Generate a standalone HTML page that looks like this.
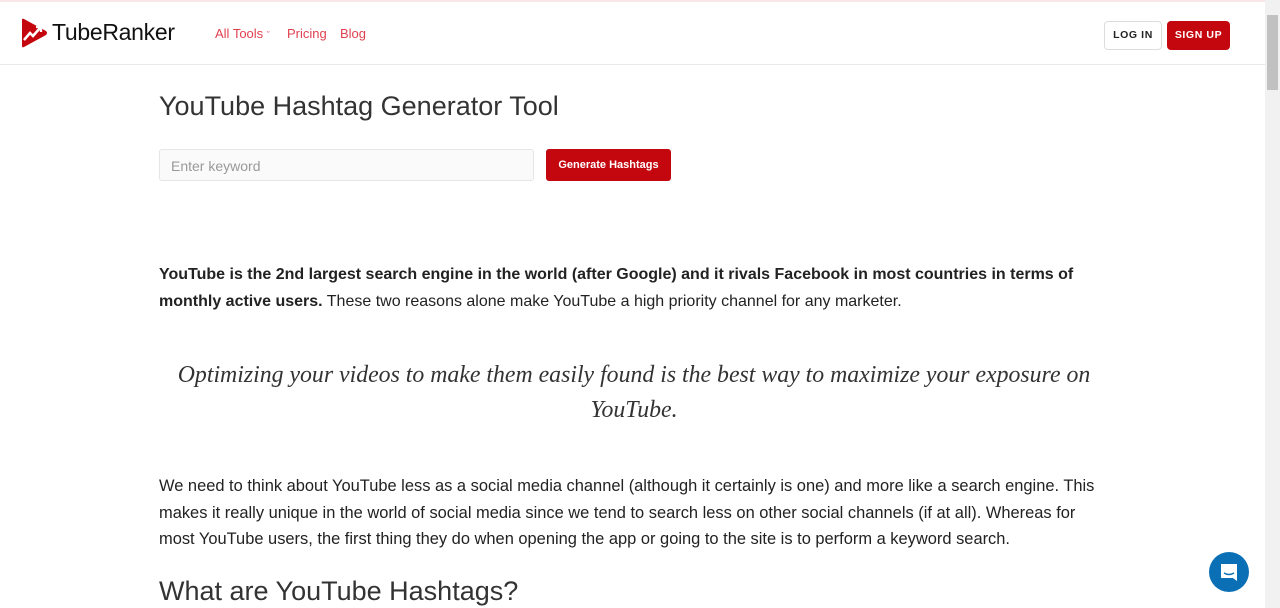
<!DOCTYPE html>
<html><head><style>
*{margin:0;padding:0;box-sizing:border-box}
body{width:1280px;height:608px;overflow:hidden;background:#fff;font-family:"Liberation Sans",sans-serif;color:#222;position:relative}
.top{position:absolute;left:0;top:0;width:1265px;height:2px;background:#f8e6e8}
.hdr{position:absolute;left:0;top:2px;width:1265px;height:63px;border-bottom:1px solid #e8e8e8}
.logo{position:absolute;left:20px;top:16px}
.brand{position:absolute;left:52px;top:17px;font-size:23px;color:#111;letter-spacing:-0.3px}
.nav{position:absolute;top:24px;font-size:13px;color:#e0414f}
.btn{position:absolute;top:19px;height:29px;border-radius:4px;font-size:11px;font-weight:bold;letter-spacing:0.6px;text-align:center;line-height:29px}
.sb{position:absolute;right:0;top:0;width:15px;height:608px;background:#f1f1f1}
.thumb{position:absolute;right:2px;top:15px;width:11px;height:75px;background:#c1c1c1}
h1{position:absolute;left:159px;top:91px;font-size:27px;font-weight:normal;color:#333}
.inp{position:absolute;left:159px;top:149px;width:375px;height:32px;border:1px solid #e6e6e6;border-radius:3px;background:#fafafa;font-size:14px;color:#999;padding:8px 11px}
.gen{position:absolute;left:546px;top:149px;width:125px;height:32px;background:#c4070f;border-radius:3px;color:#fff;font-size:11px;font-weight:bold;text-align:center;line-height:32px}
p{position:absolute;left:159px;width:950px;font-size:16px;line-height:26.5px;color:#222}
.q{position:absolute;left:159px;width:950px;text-align:center;font-family:"Liberation Serif",serif;font-style:italic;font-size:23.8px;line-height:35px;color:#333}
h2{position:absolute;left:159px;top:576px;font-size:27px;font-weight:normal;color:#333}
.chat{position:absolute;left:1209px;top:552px;width:40px;height:40px;border-radius:50%;background:#0a6fb5}
</style></head><body>
<div class="top"></div>
<div class="hdr">
<svg class="logo" width="28" height="30" viewBox="0 0 28 30"><path d="M2 2 Q2 0 4 1 L26 13 Q28 15 26 17 L4 29 Q2 30 2 28 Z" fill="#c4070f"/><path d="M4 22 L10 15 L13 18 L20 10" stroke="#fff" stroke-width="2.5" fill="none"/><path d="M16 9 L21 9 L21 14" stroke="#fff" stroke-width="2.3" fill="none"/></svg>
<div class="brand">TubeRanker</div>
<div class="nav" style="left:215px">All Tools <span style="font-size:9px">ˇ</span></div>
<div class="nav" style="left:287px">Pricing</div>
<div class="nav" style="left:340px">Blog</div>
<div class="btn" style="left:1104px;width:58px;border:1px solid #ddd;color:#222;line-height:27px;font-size:10.5px">LOG IN</div>
<div class="btn" style="left:1167px;width:63px;background:#c4070f;color:#fff;font-size:10.5px">SIGN UP</div>
</div>
<div class="sb"><div class="thumb"></div></div>
<h1>YouTube Hashtag Generator Tool</h1>
<div class="inp">Enter keyword</div>
<div class="gen">Generate Hashtags</div>
<p style="top:262px"><b>YouTube is the 2nd largest search engine in the world (after Google) and it rivals Facebook in most countries in terms of monthly active users.</b> These two reasons alone make YouTube a high priority channel for any marketer.</p>
<div class="q" style="top:358px">Optimizing your videos to make them easily found is the best way to maximize your exposure on YouTube.</div>
<p style="top:473px;font-size:16.45px;width:945px">We need to think about YouTube less as a social media channel (although it certainly is one) and more like a search engine. This makes it really unique in the world of social media since we tend to search less on other social channels (if at all). Whereas for most YouTube users, the first thing they do when opening the app or going to the site is to perform a keyword search.</p>
<h2>What are YouTube Hashtags?</h2>
<div class="chat"><svg width="40" height="40" viewBox="0 0 40 40"><path d="M12 12 h16 v17 l-4 -3 h-12 z" fill="#fff"/><path d="M15 21 q5 3 10 0" stroke="#0a6fb5" stroke-width="1.5" fill="none"/></svg></div>
</body></html>
